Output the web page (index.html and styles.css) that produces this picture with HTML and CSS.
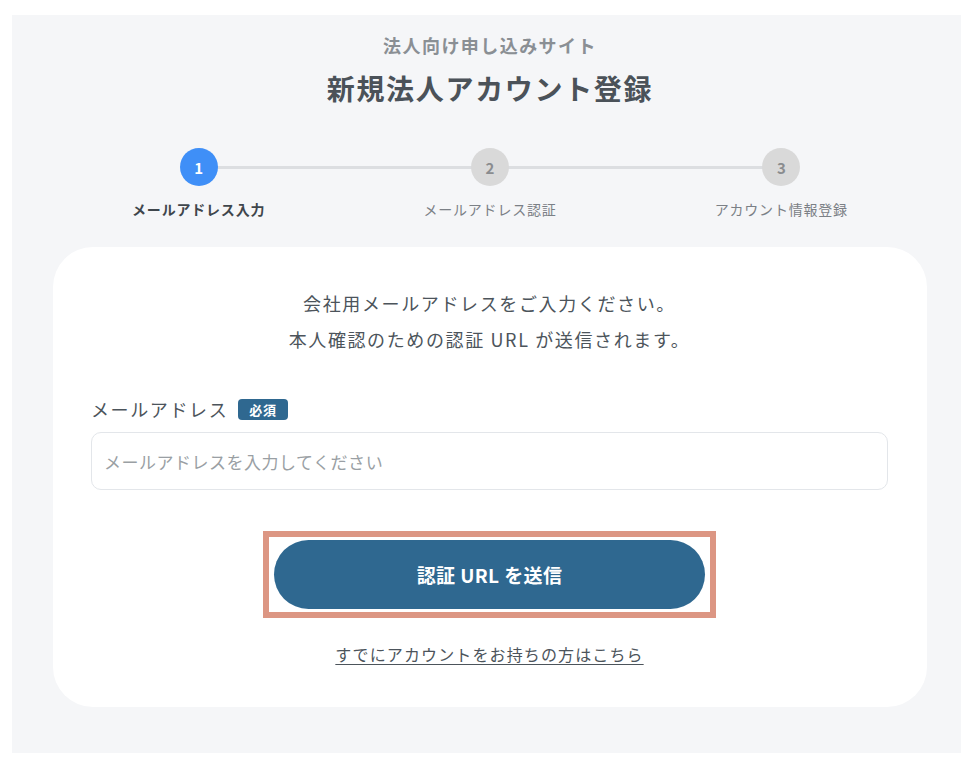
FILE: index.html
```html
<!DOCTYPE html>
<html lang="ja">
<head>
    <meta charset="UTF-8">
    <meta name="viewport" content="width=device-width, initial-scale=1.0">
    <title>新規法人アカウント登録</title>
    <link rel="stylesheet" href="styles.css">
</head>
<body>

    <div class="panel">
        <p class="site-name">法人向け申し込みサイト</p>
        <h1 class="page-title">新規法人アカウント登録</h1>

        <!-- ステップ表示 -->
        <ol class="stepper">
            <li class="step active">
                <span class="step-num">1</span>
                <span class="step-label">メールアドレス入力</span>
            </li>
            <li class="step">
                <span class="step-num">2</span>
                <span class="step-label">メールアドレス認証</span>
            </li>
            <li class="step">
                <span class="step-num">3</span>
                <span class="step-label">アカウント情報登録</span>
            </li>
        </ol>

        <div class="card">
            <p class="lead">会社用メールアドレスをご入力ください。<br>本人確認のための認証 URL が送信されます。</p>

            <label class="field-label" for="email">メールアドレス <span class="badge">必須</span></label>
            <input class="field-input" id="email" type="email" placeholder="メールアドレスを入力してください">

            <div class="submit-frame">
                <button class="submit-btn" type="button">認証 URL を送信</button>
            </div>

            <a class="login-link" href="#">すでにアカウントをお持ちの方はこちら</a>
        </div>
    </div>

</body>
</html>
```

FILE: styles.css
```css
body {
    margin: 0;
    background-color: #ffffff;
    font-family: "Noto Sans CJK JP", "Noto Sans", sans-serif;
    color: #4b5259;
    letter-spacing: 0.05em;
}
.panel {
    margin: 15px 19px 0 12px;
    padding: 18px 34px 46px 41px;
    background-color: #f5f6f8;
    display: flex;
    flex-direction: column;
    align-items: stretch;
}
.site-name {
    margin: 0;
    font-size: 18px;
    line-height: 24px;
    font-weight: 700;
    letter-spacing: 0.08em;
    color: #8a8f94;
    text-align: center;
}
.page-title {
    margin: 13px 0 0;
    font-size: 28px;
    line-height: 36px;
    font-weight: 700;
    letter-spacing: 0.06em;
    color: #4b5259;
    text-align: center;
}
/* ステップ */
.stepper {
    position: relative;
    list-style: none;
    margin: 42px 0 0;
    padding: 0;
    display: grid;
    grid-template-columns: repeat(3, 1fr);
}
.stepper::before {
    content: "";
    position: absolute;
    top: 18px;
    left: 16.67%;
    right: 16.67%;
    height: 3px;
    background: #dcdee1;
}
.step {
    position: relative;
    display: flex;
    flex-direction: column;
    align-items: center;
}
.step-num {
    width: 38px;
    height: 38px;
    border-radius: 50%;
    background: #d9d9d9;
    color: #8a8c8f;
    font-size: 15px;
    font-weight: 700;
    letter-spacing: 0;
    display: flex;
    justify-content: center;
    align-items: center;
}
.step-label {
    margin-top: 13px;
    font-size: 14px;
    line-height: 20px;
    color: #7b8086;
}
.step.active .step-num {
    background: #3f8ff7;
    color: #ffffff;
}
.step.active .step-label {
    font-weight: 700;
    color: #3f464c;
}
/* カード */
.card {
    margin-top: 28px;
    padding: 38px 39px 41px 38px;
    background: #ffffff;
    border-radius: 40px;
    display: flex;
    flex-direction: column;
}
.lead {
    margin: 0;
    font-size: 18px;
    line-height: 36px;
    letter-spacing: 0.09em;
    text-align: center;
    color: #4c545b;
}
.field-label {
    margin-top: 39px;
    font-size: 18px;
    line-height: 26px;
    letter-spacing: 0.09em;
    color: #4c545b;
    display: flex;
    align-items: center;
    gap: 10px;
}
.badge {
    background: #2f6890;
    color: #ffffff;
    font-size: 13px;
    font-weight: 700;
    line-height: 21px;
    letter-spacing: 0.05em;
    padding: 0 11px;
    border-radius: 4px;
}
.field-input {
    margin-top: 10px;
    height: 58px;
    box-sizing: border-box;
    padding: 0 12px;
    border: 1px solid #e3e6ea;
    border-radius: 10px;
    font-family: inherit;
    font-size: 17px;
    letter-spacing: 0.03em;
    color: #4c545b;
    background: #ffffff;
}
.field-input::placeholder {
    color: #9a9fa4;
}
.submit-frame {
    align-self: center;
    margin-top: 41px;
    padding: 3px 5px;
    border: 6px solid #dc9683;
}
.submit-btn {
    display: block;
    width: 431px;
    height: 69px;
    border: none;
    border-radius: 35px;
    background: #2f6890;
    color: #ffffff;
    font-family: inherit;
    font-size: 19px;
    font-weight: 700;
    letter-spacing: 0.02em;
    cursor: pointer;
}
.login-link {
    align-self: center;
    margin-top: 24px;
    font-size: 16px;
    line-height: 24px;
    letter-spacing: 0.07em;
    color: #4c545b;
    text-decoration: underline;
    text-underline-offset: 3px;
}
```
